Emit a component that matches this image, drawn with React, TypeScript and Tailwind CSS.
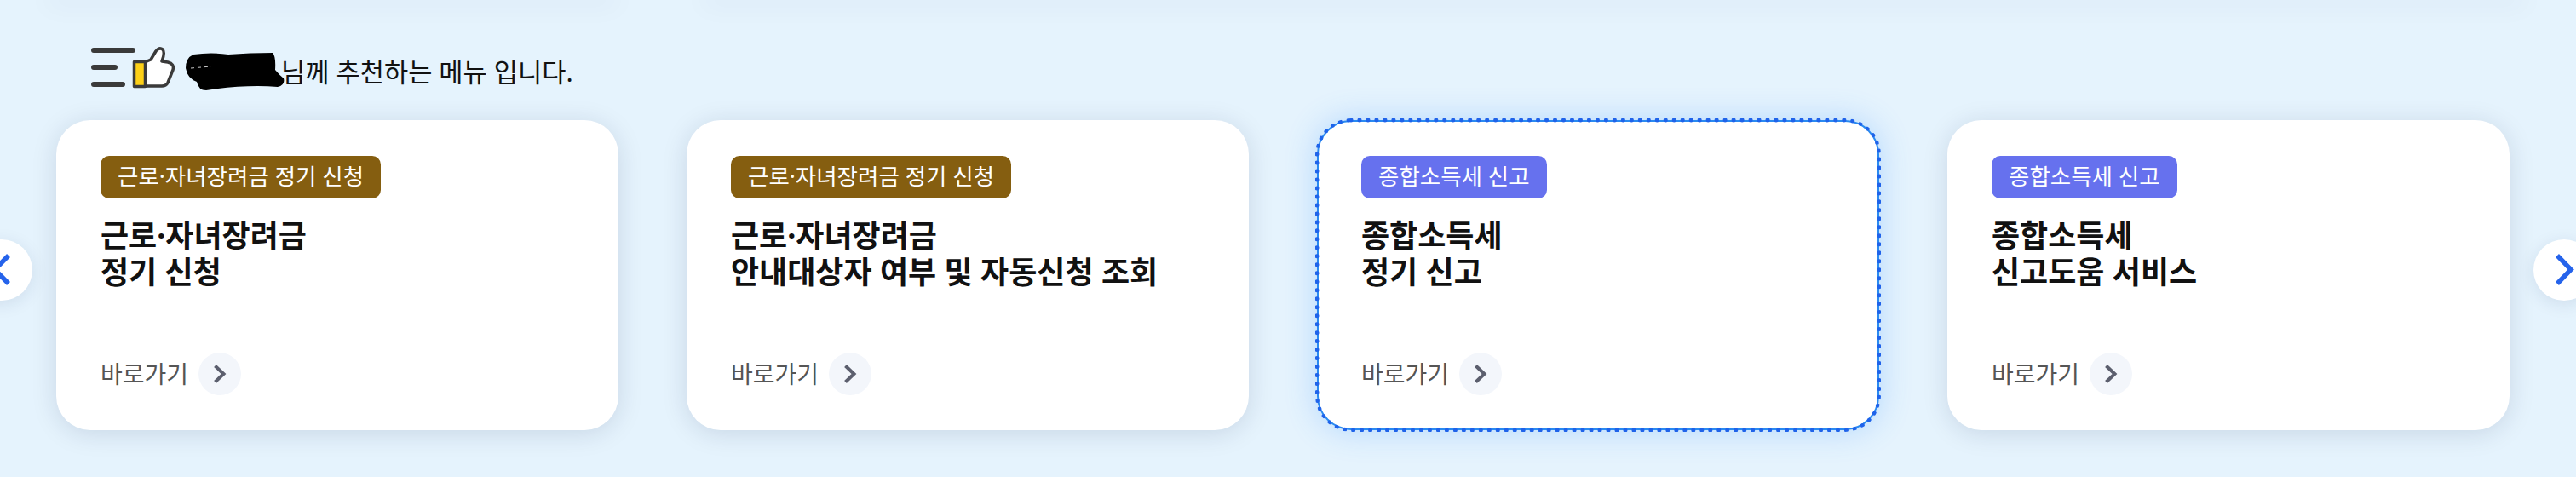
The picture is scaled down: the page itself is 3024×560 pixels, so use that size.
import React from "react";

const cards = [
  { tag: "근로·자녀장려금 정기 신청", color: "bg-[#855e10]", lines: ["근로·자녀장려금", "정기 신청"], focus: false },
  { tag: "근로·자녀장려금 정기 신청", color: "bg-[#855e10]", lines: ["근로·자녀장려금", "안내대상자 여부 및 자동신청 조회"], focus: false },
  { tag: "종합소득세 신고", color: "bg-[#6671ee]", lines: ["종합소득세", "정기 신고"], focus: true },
  { tag: "종합소득세 신고", color: "bg-[#6671ee]", lines: ["종합소득세", "신고도움 서비스"], focus: false },
];

function HeaderIcon() {
  return (
    <svg width="100" height="50" viewBox="0 0 100 50" fill="none" className="shrink-0">
      <path d="M3 4H49M3 24H28M3 44H37" stroke="#3a3a3a" strokeWidth="6" strokeLinecap="round" />
      <path
        d="M63 18L70 15L76 5Q80 0 84 3Q87 7 83 17L90 18Q98 20 96 27L90 42Q88 46 83 46L63 46Z"
        fill="#fff"
        stroke="#3a3a3a"
        strokeWidth="3.5"
        strokeLinejoin="round"
      />
      <rect x="50.5" y="17.5" width="13" height="29" fill="#fdd017" stroke="#3a3a3a" strokeWidth="3.5" strokeLinejoin="round" />
    </svg>
  );
}

function Scribble() {
  return (
    <svg width="116" height="44" viewBox="0 0 116 44" className="shrink-0">
      <path
        d="M9 2Q30 -1 50 2Q75 0 102 0Q106 4 105 20Q110 26 115 30Q117 38 108 40Q70 37 24 44Q15 44 13 34Q2 30 0 18Q0 6 9 2Z"
        fill="#000"
      />
      <path d="M6 18L30 16" stroke="#fff" strokeWidth="1" strokeDasharray="4 4" opacity="0.8" />
    </svg>
  );
}

function Card({ tag, color, lines, focus }: (typeof cards)[number]) {
  return (
    <div
      className={
        "w-[660px] h-[364px] shrink-0 rounded-[40px] bg-white flex flex-col items-start " +
        (focus
          ? "border-2 border-[#2a8af0] outline-[5px] outline-dotted outline-[#1f63ea] -outline-offset-3 shadow-[0_0_36px_rgba(60,150,255,0.3)] pt-[40px] pb-[39px] pl-[50px]"
          : "shadow-[0_4px_30px_rgba(0,30,70,0.13)] pt-[42px] pb-[41px] pl-[52px]")
      }
    >
      <span className={"h-[50px] px-5 rounded-[10px] flex items-center text-[26.5px] text-white whitespace-nowrap " + color}>
        {tag}
      </span>
      <div className="mt-[22px] text-[36px] leading-[43px] font-bold text-[#111]">
        {lines.map((l) => (
          <div key={l}>{l}</div>
        ))}
      </div>
      <div className="mt-auto flex items-center gap-[12px]">
        <span className="text-[28px] leading-[50px] text-[#555]">바로가기</span>
        <span className="w-[50px] h-[50px] rounded-full bg-[#f3f6fb] flex items-center justify-center">
          <svg width="16" height="22" viewBox="0 0 16 22" fill="none">
            <path d="M2.5 1.5L12.5 11L2.5 20.5" stroke="#5c5f6e" strokeWidth="4" />
          </svg>
        </span>
      </div>
    </div>
  );
}

function Arrow({ side }: { side: "left" | "right" }) {
  const isLeft = side === "left";
  return (
    <button
      className={
        "absolute top-[281px] w-[72px] h-[72px] rounded-full bg-white flex items-center justify-center shadow-[0_4px_20px_rgba(0,40,90,0.1)] " +
        (isLeft ? "left-[-34px]" : "right-[-22px]")
      }
    >
      <svg width="24" height="40" viewBox="0 0 24 40" fill="none">
        {isLeft ? (
          <path d="M20 3L4 19.5L20 36" stroke="#2563eb" strokeWidth="5.5" />
        ) : (
          <path d="M4 3L20 19.5L4 36" stroke="#2563eb" strokeWidth="5.5" />
        )}
      </svg>
    </button>
  );
}

export default function App() {
  return (
    <div
      className="relative w-[3024px] h-[560px] overflow-hidden bg-[#e5f3fd] text-black"
      style={{ fontFamily: '"Noto Sans", "Noto Sans CJK KR", sans-serif' }}
    >
      <div className="flex h-0 gap-[110px] pl-[60px]">
        <div className="w-[660px] h-0 shadow-[0_0_30px_6px_rgba(0,40,90,0.06)]" />
        <div className="w-[2130px] h-0 shadow-[0_0_30px_6px_rgba(0,40,90,0.06)]" />
      </div>
      <div className="flex items-center h-[50px] mt-[55px] pl-[107px]">
        <HeaderIcon />
        <div className="ml-[11px] mt-[8px] flex">
          <Scribble />
        </div>
        <span className="ml-[-4px] text-[30.7px] leading-[50px] text-[#111] whitespace-nowrap mt-[8px]">
          님께 추천하는 메뉴 입니다.
        </span>
      </div>
      <div className="flex gap-[80px] pl-[66px] mt-[36px]">
        {cards.map((c, i) => (
          <Card key={i} {...c} />
        ))}
      </div>
      <Arrow side="left" />
      <Arrow side="right" />
    </div>
  );
}
